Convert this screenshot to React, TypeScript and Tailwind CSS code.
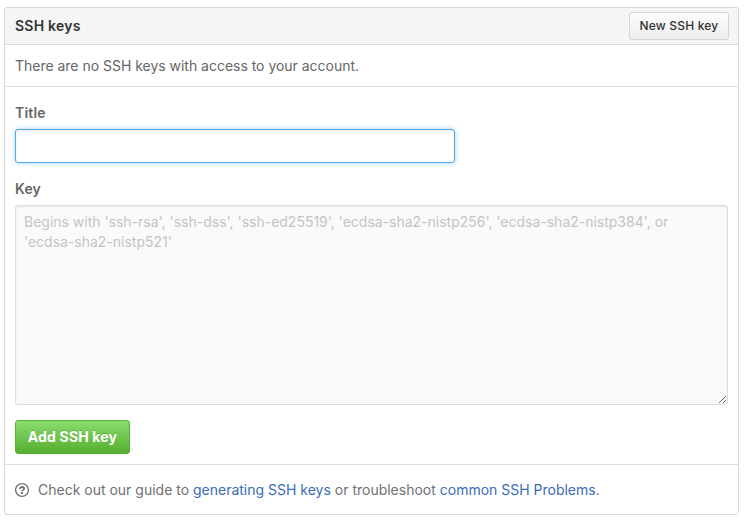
import React from "react";

function QuestionIcon() {
  return (
    <svg width="14" height="16" viewBox="0 0 14 16" fill="currentColor" className="shrink-0" aria-hidden="true">
      <path
        fillRule="evenodd"
        d="M6 10h2v2H6v-2zm4-3.5C10 8.64 8 9 8 9H6c0-.55.45-1 1-1h.5c.28 0 .5-.22.5-.5v-1c0-.28-.22-.5-.5-.5h-1c-.28 0-.5.22-.5.5V7H4c0-1.5 1.5-3 3-3s3 1 3 2.5zM7 2.3c3.14 0 5.7 2.56 5.7 5.7s-2.56 5.7-5.7 5.7A5.71 5.71 0 0 1 1.3 8c0-3.14 2.56-5.7 5.7-5.7zM7 1C3.14 1 0 4.14 0 8s3.14 7 7 7 7-3.14 7-7-3.14-7-7-7z"
      />
    </svg>
  );
}

export default function App() {
  return (
    <div className="h-[522px] w-[746px] bg-white pt-[7px] pl-1 font-['Inter','Liberation_Sans',sans-serif] text-sm leading-5 tracking-[-0.02px] text-[#666]">
      <section className="w-[735px] rounded-[3px] border border-[#d8d8d8]">
        <header className="flex h-[37px] items-center justify-between rounded-t-[2px] border-b border-[#d8d8d8] bg-[#f5f5f5] pr-[9px] pl-2.5">
          <h2 className="font-semibold tracking-[0.22px] text-[#333]">SSH keys</h2>
          <button className="h-7 w-[100px] rounded-[3px] border border-[#d5d5d5] bg-linear-to-b from-[#fcfcfc] to-[#eee] text-xs font-medium tracking-[0.18px] whitespace-nowrap text-[#333]">
            New SSH key
          </button>
        </header>

        <p className="h-[42px] border-b border-[#ddd] px-2.5 pt-[11px]">
          There are no SSH keys with access to your account.
        </p>

        <form className="flex h-[378px] flex-col items-start border-b border-[#ddd] px-2.5 pt-4">
          <label htmlFor="title" className="font-semibold tracking-[0.2px]">Title</label>
          <input
            id="title"
            className="mt-1.5 h-[34px] w-[440px] rounded-[3px] border border-[#51a7e8] bg-white px-2 shadow-[inset_0_1px_2px_rgba(0,0,0,0.075),0_0_5px_rgba(81,167,232,0.5)] outline-none"
          />
          <label htmlFor="key" className="mt-4 font-semibold tracking-[0.1px]">Key</label>
          <textarea
            id="key"
            placeholder="Begins with 'ssh-rsa', 'ssh-dss', 'ssh-ed25519', 'ecdsa-sha2-nistp256', 'ecdsa-sha2-nistp384', or 'ecdsa-sha2-nistp521'"
            className="mt-1.5 h-[200px] w-[713px] rounded-[3px] border border-[#ddd] bg-[#fafafa] px-2 py-1.5 tracking-[-0.01px] shadow-[inset_0_1px_2px_rgba(0,0,0,0.075)] outline-none placeholder:text-[#c4c4c4]"
          />
          <button
            type="button"
            className="mt-[15px] h-[34px] w-[115px] rounded-[3px] border border-[#5aad35] bg-linear-to-b from-[#8add6d] to-[#55ae2e] font-bold tracking-[0.17px] whitespace-nowrap text-white [text-shadow:0_-1px_0_rgba(0,0,0,0.15)]"
          >
            Add SSH key
          </button>
        </form>

        <footer className="flex h-[49px] items-center gap-[9px] px-2.5 tracking-[-0.003px] text-[#707070]">
          <QuestionIcon />
          <p className="whitespace-nowrap">
            Check out our guide to <a className="text-[#3a6cb8]">generating SSH keys</a> or troubleshoot{" "}
            <a className="text-[#3a6cb8]">common SSH Problems</a>.
          </p>
        </footer>
      </section>
    </div>
  );
}
